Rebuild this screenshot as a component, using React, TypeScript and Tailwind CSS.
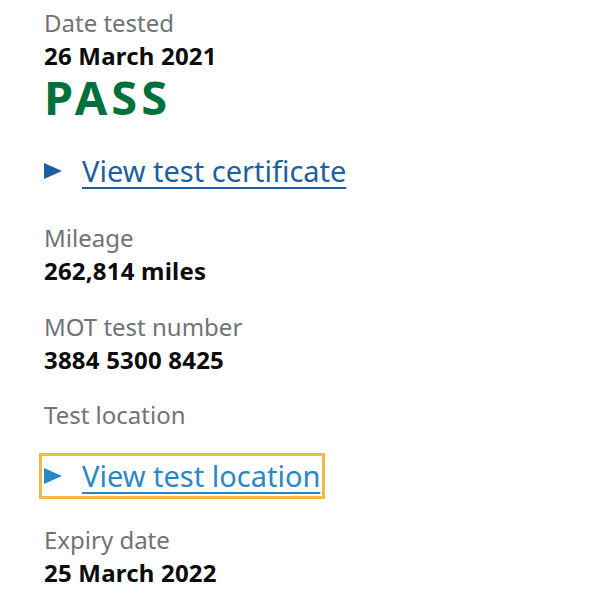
import type { ReactNode } from 'react'

function Label({ children }: { children: ReactNode }) {
  return <div className="text-[24px] leading-[32px] text-[#6f7377]">{children}</div>
}

function Value({ children }: { children: ReactNode }) {
  return (
    <div className="mt-[3px] text-[24px] leading-[28px] font-bold tracking-[0.2px] text-[#0b0c0c]">
      {children}
    </div>
  )
}

function Triangle({ color }: { color: string }) {
  return (
    <svg width="18" height="16" viewBox="0 0 18 16" className="shrink-0" aria-hidden>
      <polygon points="0,0 18,8 0,16" fill={color} />
    </svg>
  )
}

function DetailsLink({ text, focused }: { text: string; focused?: boolean }) {
  const color = focused ? '#2b87c6' : '#1d5fa0'
  return (
    <div
      className={
        'inline-flex items-center -ml-[5px] pl-[2px] pr-[2px] border-[3px] ' +
        (focused ? 'border-[#f5b943]' : 'border-transparent')
      }
    >
      <Triangle color={color} />
      <a
        href="#"
        className="ml-[20px] text-[29px] leading-[40px] underline decoration-[2px] underline-offset-[5px]"
        style={{ color }}
      >
        {text}
      </a>
    </div>
  )
}

export default function App() {
  return (
    <div className="min-h-[600px] w-[604px] bg-white pl-[44px] pt-[7px] font-['Noto_Sans',sans-serif]">
      <Label>Date tested</Label>
      <Value>26 March 2021</Value>
      <div className="mt-[4px] text-[47px] leading-[46px] font-bold tracking-[4px] text-[#00703c]">PASS</div>

      <div className="mt-[28px]">
        <DetailsLink text="View test certificate" />
      </div>

      <div className="mt-[28px]">
        <Label>Mileage</Label>
        <Value>262,814 miles</Value>
      </div>

      <div className="mt-[26px]">
        <Label>MOT test number</Label>
        <Value>3884 5300 8425</Value>
      </div>

      <div className="mt-[25px]">
        <Label>Test location</Label>
      </div>

      <div className="mt-[22px]">
        <DetailsLink text="View test location" focused />
      </div>

      <div className="mt-[25px]">
        <Label>Expiry date</Label>
        <Value>25 March 2022</Value>
      </div>
    </div>
  )
}
